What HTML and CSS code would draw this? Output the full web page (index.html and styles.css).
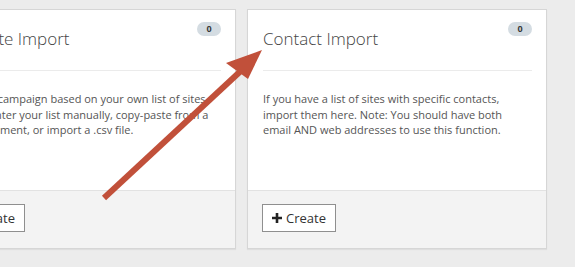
FILE: index.html
```html
<!DOCTYPE html>
<html lang="en">
<head>
  <meta charset="UTF-8" />
  <title>Import Campaigns</title>
  <link rel="stylesheet" href="styles.css">
</head>
<body>
  <!-- Import options -->
  <div class="import-row">
    <div class="import-card">
      <div class="card-head">
        <h3>Website Import</h3>
        <span class="badge">0</span>
      </div>
      <div class="card-body">
        <p>Create a campaign based on your own list of sites. Simply enter your list manually, copy-paste from a text document, or import a .csv file.</p>
      </div>
      <div class="card-foot">
        <button class="btn-create">
          <svg class="plus" width="10" height="10" viewBox="0 0 10 10"><path d="M5 0v10M0 5h10" stroke="#222" stroke-width="2.6" /></svg>
          Create
        </button>
      </div>
    </div>

    <div class="import-card">
      <div class="card-head">
        <h3>Contact Import</h3>
        <span class="badge">0</span>
      </div>
      <div class="card-body">
        <p>If you have a list of sites with specific contacts, import them here. Note: You should have both email AND web addresses to use this function.</p>
      </div>
      <div class="card-foot">
        <button class="btn-create">
          <svg class="plus" width="10" height="10" viewBox="0 0 10 10"><path d="M5 0v10M0 5h10" stroke="#222" stroke-width="2.6" /></svg>
          Create
        </button>
      </div>
    </div>
  </div>

  <!-- annotation arrow drawn over the cards -->
  <svg class="annotation" width="575" height="267" viewBox="0 0 575 267">
    <line x1="104" y1="198" x2="244" y2="68" stroke="#c1503a" stroke-width="6" />
    <polygon points="262,50 226,63 248,79" fill="#c1503a" />
  </svg>
</body>
</html>
```

FILE: styles.css
```css
* {
  margin: 0;
  padding: 0;
  box-sizing: border-box;
}
body {
  background-color: #ececec;
  font-family: "Open Sans", Lato, sans-serif;
  color: #555;
  width: 575px;
  height: 267px;
  overflow: hidden;
}
.import-row {
  display: flex;
  gap: 11px;
  margin-left: -64px;
  padding-top: 9px;
}
.import-card {
  flex: 0 0 300px;
  height: 240px;
  display: flex;
  flex-direction: column;
  background-color: #fff;
  border: 1px solid #d6d6d6;
  box-shadow: 0 1px 1px rgba(0,0,0,0.06);
}
/* card header */
.card-head {
  display: flex;
  justify-content: space-between;
  align-items: flex-start;
  margin: 0 14px 0 15px;
  padding: 13px 0 18px;
  border-bottom: 1px solid #ebebeb;
}
.card-head h3 {
  margin-top: 3px;
  font-size: 17px;
  line-height: 26px;
  font-weight: 300;
  color: #444;
}
.badge {
  display: inline-block;
  width: 24px;
  height: 14px;
  margin-top: -1px;
  border-radius: 7px;
  background-color: #d4dce2;
  color: #3a3a3a;
  font-size: 9px;
  font-weight: bold;
  line-height: 14px;
  text-align: center;
}
/* card body */
.card-body {
  flex: 1;
  padding: 20px 15px 0;
}
.card-body p {
  font-size: 11px;
  line-height: 15.5px;
  color: #555;
}
/* card footer */
.card-foot {
  background-color: #f3f3f3;
  border-top: 1px solid #e2e2e2;
  padding: 13px 14px 16px;
}
.btn-create {
  display: inline-flex;
  align-items: center;
  justify-content: center;
  gap: 4px;
  height: 28px;
  width: 74px;
  background-color: #fff;
  border: 1px solid #8f8f8f;
  font-family: "Open Sans", Lato, sans-serif;
  font-size: 13px;
  color: #333;
  cursor: pointer;
}
.annotation {
  position: absolute;
  top: 0;
  left: 0;
  pointer-events: none;
}
```
